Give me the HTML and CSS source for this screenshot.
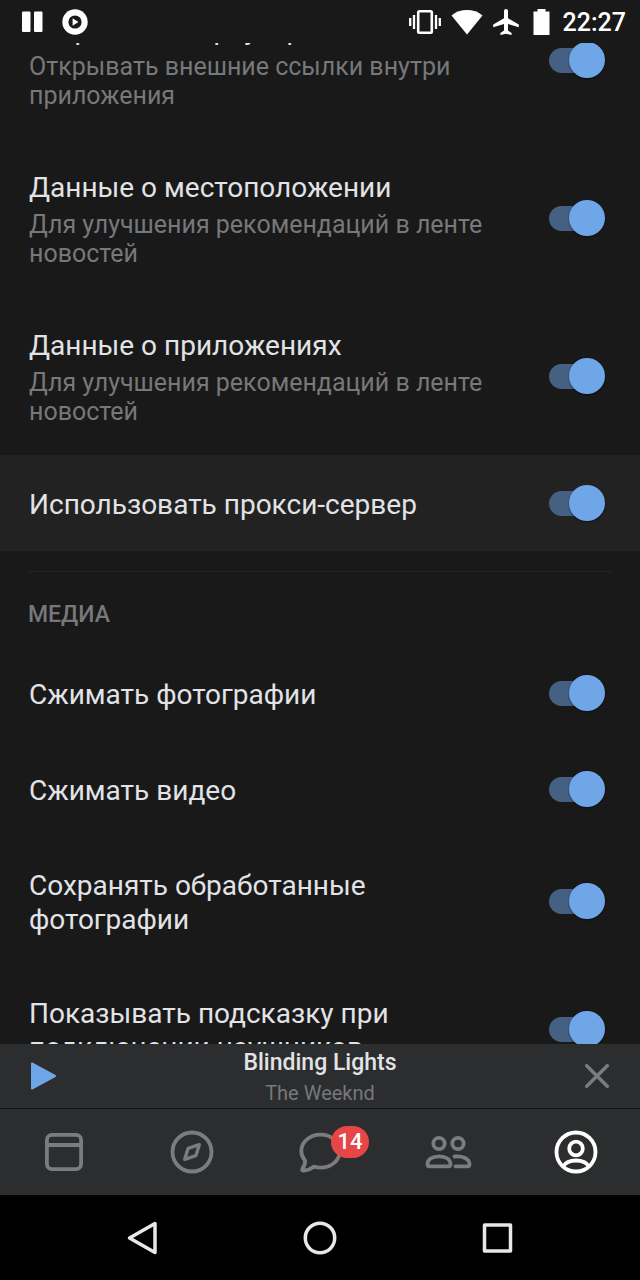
FILE: index.html
```html
<!DOCTYPE html>
<html lang="ru">
<head>
<meta charset="utf-8">
<meta name="viewport" content="width=device-width, initial-scale=1">
<title>Настройки</title>
<link rel="stylesheet" href="styles.css">
</head>
<body class="screen">
<header class="status">
  <div class="status-group status-left">
    <svg width="22" height="22" viewBox="0 0 22 22" fill="#fff" aria-hidden="true"><rect x="0" y="0.500" width="8.500" height="20.500" rx="1"/><rect x="12" y="0.500" width="8.500" height="20.500" rx="1"/></svg>
    <svg width="26" height="26" viewBox="0 0 26 26" aria-hidden="true"><circle cx="13" cy="13" r="12.700" fill="#fff"/><circle cx="13" cy="13" r="6.600" fill="#191919"/><path d="M10.600 9.200v7.600l5.800-3.800z" fill="#fff"/></svg>
  </div>
  <div class="status-group status-right">
    <svg width="32" height="26" viewBox="0 0 32 26" aria-hidden="true"><rect x="9.200" y="2.300" width="13.600" height="21.400" rx="1.200" fill="none" stroke="#fff" stroke-width="2.600"/><path d="M1.200 9v8M5 6v14M27 6v14M30.800 9v8" stroke="#fff" stroke-width="2.300"/></svg>
    <svg width="32" height="26" viewBox="0 0 32 26" aria-hidden="true"><path d="M.5 6.500C9 -.8 23 -.8 31.500 6.500L16 25.500z" fill="#fff"/></svg>
    <svg width="26" height="26" viewBox="0 0 26 26" aria-hidden="true"><path d="M13 0c1.200 0 2 .9 2 2v7.200l10.800 6.300v2.800L15 15v6.600l3.600 2.300V26L13 24.700 7.400 26v-2.100L11 21.600V15L.2 18.300v-2.800L11 9.200V2c0-1.100.8-2 2-2z" fill="#fff"/></svg>
    <svg class="battery" width="17" height="26" viewBox="0 0 17 26" aria-hidden="true"><path d="M4.500 0h8v2.500H16.500V26H.5V2.500h4z" fill="#fff"/></svg>
    <time class="clock">22:27</time>
  </div>
</header>

<main class="settings">
  <div class="settings-scroll">
    <label class="row" for="browser">
      <span class="row-text"><span class="row-title">Встроенный браузер</span><span class="row-note">Открывать внешние ссылки внутри приложения</span></span>
      <input class="switch" type="checkbox" id="browser" checked>
    </label>
    <label class="row" for="location">
      <span class="row-text"><span class="row-title">Данные о местоположении</span><span class="row-note">Для улучшения рекомендаций в ленте новостей</span></span>
      <input class="switch" type="checkbox" id="location" checked>
    </label>
    <label class="row" for="apps">
      <span class="row-text"><span class="row-title">Данные о приложениях</span><span class="row-note">Для улучшения рекомендаций в ленте новостей</span></span>
      <input class="switch" type="checkbox" id="apps" checked>
    </label>
    <label class="row row-active" for="proxy">
      <span class="row-text"><span class="row-title">Использовать прокси-сервер</span></span>
      <input class="switch" type="checkbox" id="proxy" checked>
    </label>
    <h2 class="section-title">МЕДИА</h2>
    <label class="row" for="photos">
      <span class="row-text"><span class="row-title">Сжимать фотографии</span></span>
      <input class="switch" type="checkbox" id="photos" checked>
    </label>
    <label class="row" for="video">
      <span class="row-text"><span class="row-title">Сжимать видео</span></span>
      <input class="switch" type="checkbox" id="video" checked>
    </label>
    <label class="row" for="save">
      <span class="row-text"><span class="row-title">Сохранять обработанные фотографии</span></span>
      <input class="switch" type="checkbox" id="save" checked>
    </label>
    <label class="row" for="hint">
      <span class="row-text"><span class="row-title">Показывать подсказку при подключении наушников</span></span>
      <input class="switch" type="checkbox" id="hint" checked>
    </label>
  </div>
</main>

<section class="player">
  <button class="icon-button" aria-label="Воспроизвести">
    <svg width="32" height="32" viewBox="0 0 32 32" aria-hidden="true"><path d="M5 3.500v25L28 16z" fill="#6ea6e8" stroke="#6ea6e8" stroke-width="2" stroke-linejoin="round"/></svg>
  </button>
  <div class="track">
    <span class="track-name">Blinding Lights</span>
    <span class="track-artist">The Weeknd</span>
  </div>
  <button class="icon-button" aria-label="Закрыть">
    <svg width="32" height="32" viewBox="0 0 32 32" fill="none" stroke="#7b7c7e" stroke-width="3.500" stroke-linecap="round" aria-hidden="true"><path d="M5.700 5.700l20.600 20.600M26.300 5.700L5.700 26.300"/></svg>
  </button>
</section>

<nav class="tabs">
  <button class="tab" aria-label="Новости">
    <svg width="48" height="48" viewBox="0 0 48 48" aria-hidden="true"><rect x="6.900" y="6.900" width="34.200" height="34.200" rx="5"/><path d="M7 17h34"/></svg>
  </button>
  <button class="tab" aria-label="Обзор">
    <svg width="48" height="48" viewBox="0 0 48 48" aria-hidden="true"><circle cx="24" cy="24" r="19.500"/><path d="M31.300 16.700l-3.400 10.900-11.200 3.700 3.400-10.900z" stroke-width="3.400"/></svg>
  </button>
  <button class="tab" aria-label="Сообщения">
    <svg width="48" height="48" viewBox="0 0 48 48" aria-hidden="true"><path d="M24.500 6.700C14 6.700 5.300 13.800 5.300 23c0 3.800 1.300 6.800 3.700 9.500.3 3.200-.7 6-2.700 8.500-.5 1 .2 1.700 1.200 1.600 4.500-.4 7.500-1.600 10.200-4 2.300.6 4.500 1 6.800 1 10.700 0 19.300-7.200 19.300-16.400S35.200 6.700 24.500 6.700z"/></svg>
    <span class="badge">14</span>
  </button>
  <button class="tab" aria-label="Друзья">
    <svg width="48" height="48" viewBox="0 0 48 48" aria-hidden="true"><circle cx="15" cy="15.500" r="5.700"/><circle cx="34" cy="15.500" r="5.700"/><path d="M15 28.300c-7 0-11.500 3.200-11.500 8 0 1.300.8 2 2 2h19c1.200 0 2-.7 2-2 0-4.800-4.500-8-11.500-8zM30.500 28.500c8-1 15 2.300 15 7.800 0 1.300-.8 2-2 2h-12" stroke-linecap="round"/></svg>
  </button>
  <button class="tab tab-current" aria-label="Профиль" aria-current="page">
    <svg width="48" height="48" viewBox="0 0 48 48" aria-hidden="true"><circle cx="24" cy="24" r="19.500"/><circle cx="24" cy="20.500" r="6.800"/><path d="M11 38.500c2.500-4 7.500-6 13-6s10.500 2 13 6"/></svg>
  </button>
</nav>

<nav class="system">
  <button class="system-button" aria-label="Назад"><svg width="40" height="40" viewBox="0 0 40 40" aria-hidden="true"><path d="M32 5.500v29L6.500 20z"/></svg></button>
  <button class="system-button" aria-label="Домой"><svg width="40" height="40" viewBox="0 0 40 40" aria-hidden="true"><circle cx="20" cy="20" r="14.700"/></svg></button>
  <button class="system-button" aria-label="Недавние"><svg width="40" height="40" viewBox="0 0 40 40" aria-hidden="true"><rect x="7.500" y="7" width="26" height="26"/></svg></button>
</nav>
</body>
</html>
```
FILE: styles.css
```css
* {
  box-sizing: border-box;
}

.screen {
  display: flex;
  flex-direction: column;
  height: 100vh;
  margin: 0;
  background: #191919;
  color: #e1e3e6;
  font-family: Roboto, "Noto Sans", sans-serif;
}

button {
  display: grid;
  place-items: center;
  margin: 0;
  padding: 0;
  border: 0;
  background: none;
  color: inherit;
  font: inherit;
}

svg {
  display: block;
}

.status {
  display: flex;
  flex: none;
  align-items: center;
  justify-content: space-between;
  height: 43px;
  padding: 0 14px 0 22px;
}

.status-group {
  display: flex;
  align-items: center;
}

.status-left {
  gap: 18px;
}

.status-right {
  gap: 10px;
}

.battery {
  margin: 0 3px 0 4px;
}

.clock {
  padding-top: 2px;
  color: #fff;
  font-size: 25px;
  font-weight: 500;
  line-height: 28px;
}

.settings {
  flex: 1;
  min-height: 0;
  overflow: hidden;
}

.settings-scroll {
  margin-top: -62px;
}

.row {
  display: flex;
  align-items: center;
  gap: 24px;
  min-height: 96px;
  padding: 28px 35px 28px 29px;
}

.row-active {
  background: #222;
}

.row-text {
  display: flex;
  flex: 1;
  flex-direction: column;
  padding-top: 4px;
}

.row-title {
  font-size: 28px;
  line-height: 34px;
}

.row-note {
  padding: 5px 0 1px;
  color: #76787a;
  font-size: 25px;
  line-height: 29px;
}

.switch {
  display: grid;
  flex: none;
  align-items: center;
  width: 56px;
  height: 36px;
  margin: 0;
  appearance: none;
}

.switch::before,
.switch::after {
  grid-area: 1 / 1;
  content: "";
}

.switch::before {
  width: 48px;
  height: 25px;
  border-radius: 13px;
  background: #456083;
}

.switch::after {
  justify-self: end;
  width: 36px;
  height: 36px;
  border-radius: 50%;
  background: #6ea6e8;
  box-shadow: 0 1px 2px #00000080;
}

.section-title {
  margin: 20px 28px 0;
  padding: 29px 0 16px;
  border-top: 1px solid #222;
  color: #76787a;
  font-size: 23px;
  font-weight: 500;
  line-height: 28px;
}

.player {
  display: flex;
  flex: none;
  align-items: center;
  justify-content: space-between;
  height: 65px;
  padding: 0 27px;
  border-bottom: 1px solid #151616;
  background: #2c2d2e;
}

.icon-button {
  width: 32px;
  height: 64px;
}

.track {
  display: flex;
  flex-direction: column;
  align-items: center;
  gap: 2px;
  padding-top: 3px;
}

.track-name {
  font-size: 23px;
  font-weight: 500;
  line-height: 28px;
}

.track-artist {
  color: #76787a;
  font-size: 20px;
  line-height: 28px;
}

.tabs {
  display: grid;
  flex: none;
  grid-template-columns: repeat(5, 1fr);
  height: 86px;
  background: #2c2d2e;
}

.tab {
  position: relative;
  fill: none;
  stroke: #7b7c7e;
  stroke-width: 3.8;
  stroke-linejoin: round;
}

.tab-current {
  stroke: #fff;
}

.badge {
  position: absolute;
  top: 17px;
  left: calc(50% + 11px);
  min-width: 38px;
  border-radius: 16px;
  background: #e64646;
  color: #fff;
  font-size: 22px;
  font-weight: 500;
  line-height: 32px;
  text-align: center;
}

.system {
  display: grid;
  flex: none;
  grid-template-columns: repeat(3, 1fr);
  height: 85px;
  padding: 0 54px;
  background: #000;
}

.system-button {
  fill: none;
  stroke: #e8e8e8;
  stroke-width: 3.5;
  stroke-linejoin: round;
}
```
